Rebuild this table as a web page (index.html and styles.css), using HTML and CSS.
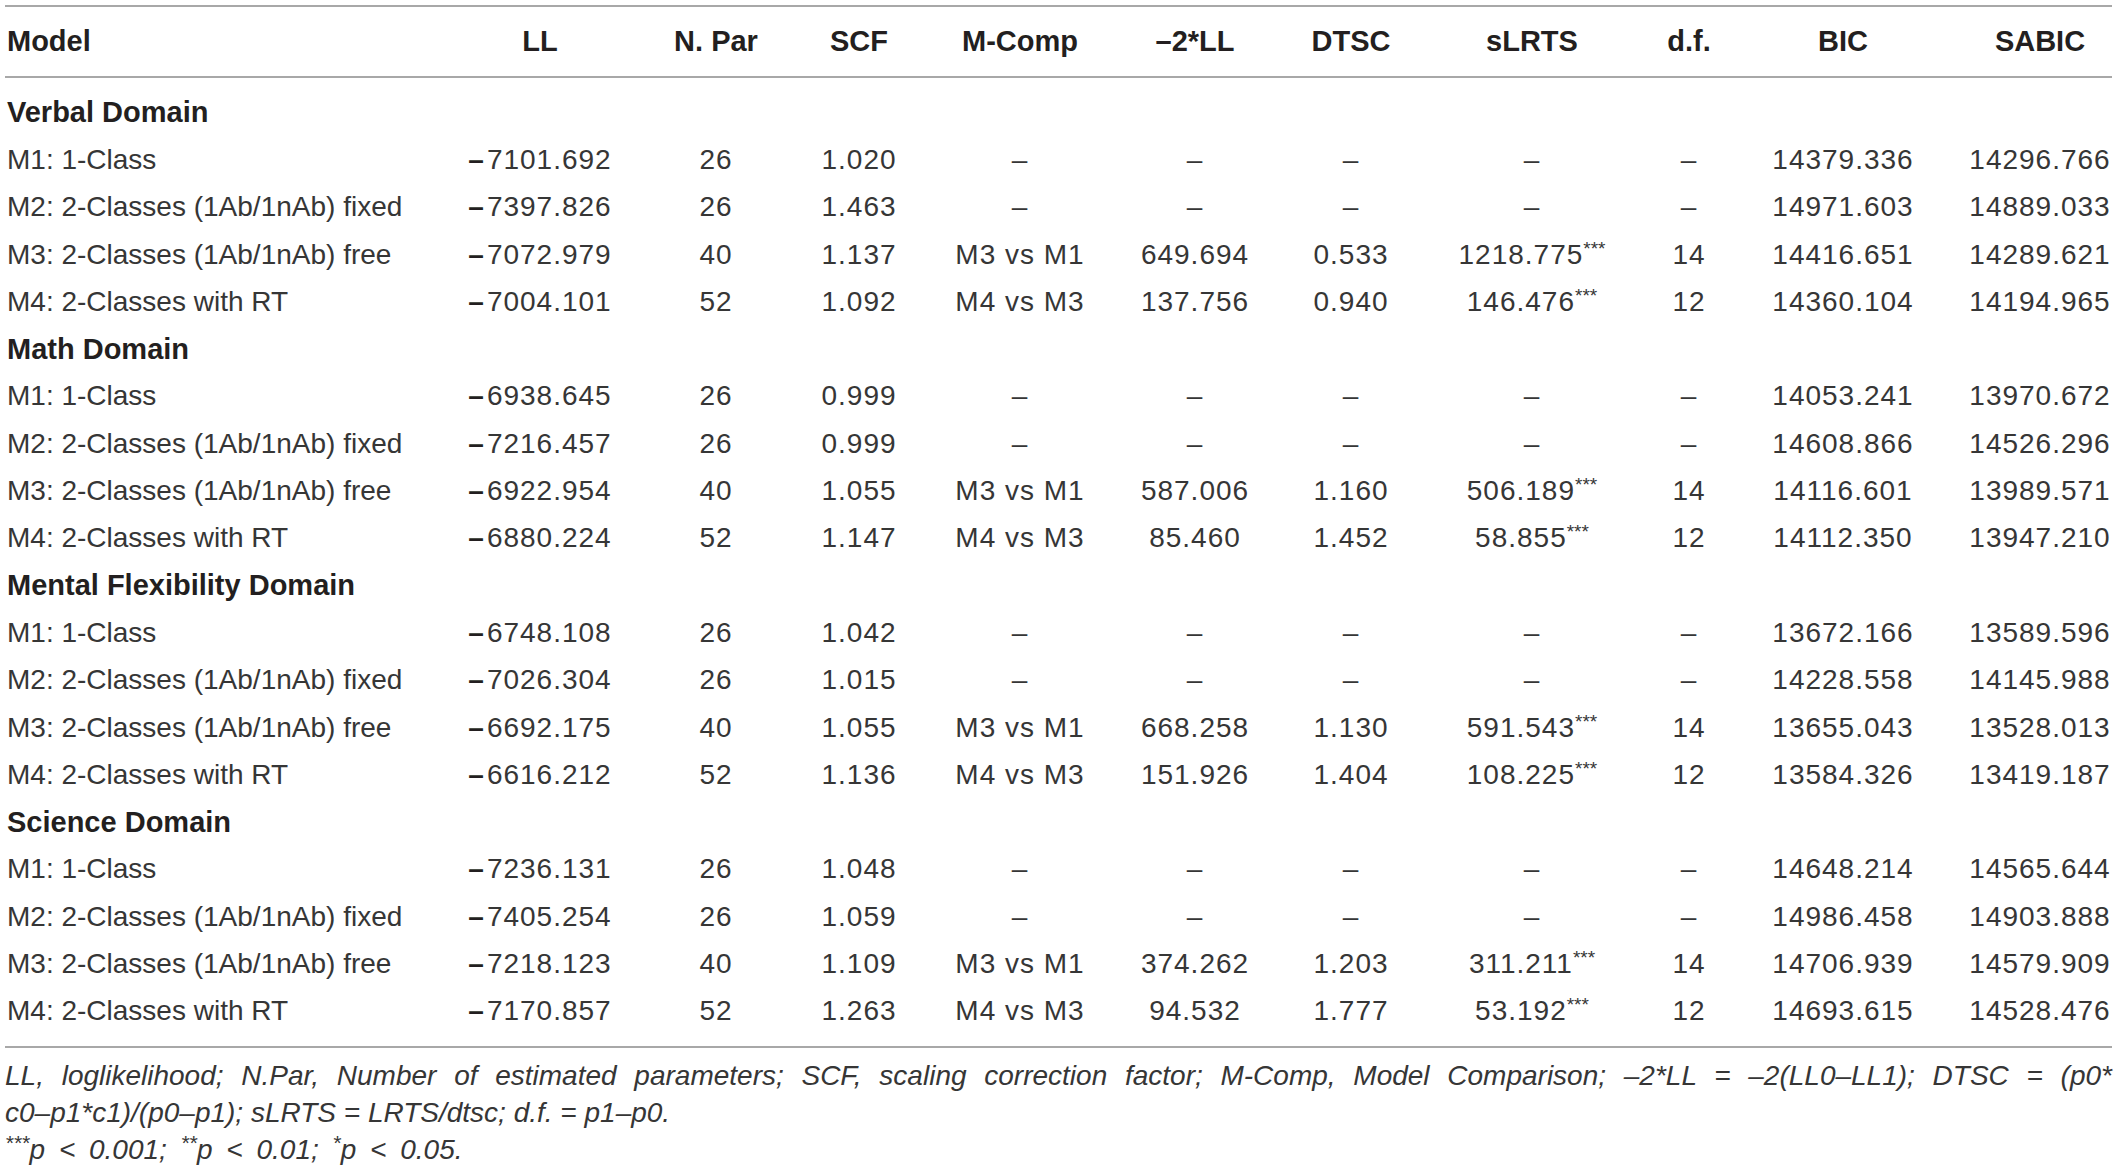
FILE: index.html
```html
<!DOCTYPE html>
<html lang="en">
<head>
<meta charset="utf-8">
<title>Model comparison table</title>
<link rel="stylesheet" href="styles.css">
</head>
<body>
<div class="page">
  <div class="tbl">
    <div class="row head">
      <div class="cell model">Model</div>
      <div class="cell">LL</div>
      <div class="cell">N. Par</div>
      <div class="cell">SCF</div>
      <div class="cell">M-Comp</div>
      <div class="cell">–2*LL</div>
      <div class="cell">DTSC</div>
      <div class="cell">sLRTS</div>
      <div class="cell">d.f.</div>
      <div class="cell">BIC</div>
      <div class="cell">SABIC</div>
    </div>
    <div class="body">
      <div class="row group"><div class="cell model">Verbal Domain</div></div>
      <div class="row"><div class="cell model">M1: 1-Class</div><div class="cell"><span class="neg">–</span>7101.692</div><div class="cell">26</div><div class="cell">1.020</div><div class="cell">–</div><div class="cell">–</div><div class="cell">–</div><div class="cell">–</div><div class="cell">–</div><div class="cell">14379.336</div><div class="cell">14296.766</div></div>
      <div class="row"><div class="cell model">M2: 2-Classes (1Ab/1nAb) fixed</div><div class="cell"><span class="neg">–</span>7397.826</div><div class="cell">26</div><div class="cell">1.463</div><div class="cell">–</div><div class="cell">–</div><div class="cell">–</div><div class="cell">–</div><div class="cell">–</div><div class="cell">14971.603</div><div class="cell">14889.033</div></div>
      <div class="row"><div class="cell model">M3: 2-Classes (1Ab/1nAb) free</div><div class="cell"><span class="neg">–</span>7072.979</div><div class="cell">40</div><div class="cell">1.137</div><div class="cell">M3 vs M1</div><div class="cell">649.694</div><div class="cell">0.533</div><div class="cell">1218.775<sup>***</sup></div><div class="cell">14</div><div class="cell">14416.651</div><div class="cell">14289.621</div></div>
      <div class="row"><div class="cell model">M4: 2-Classes with RT</div><div class="cell"><span class="neg">–</span>7004.101</div><div class="cell">52</div><div class="cell">1.092</div><div class="cell">M4 vs M3</div><div class="cell">137.756</div><div class="cell">0.940</div><div class="cell">146.476<sup>***</sup></div><div class="cell">12</div><div class="cell">14360.104</div><div class="cell">14194.965</div></div>

      <div class="row group"><div class="cell model">Math Domain</div></div>
      <div class="row"><div class="cell model">M1: 1-Class</div><div class="cell"><span class="neg">–</span>6938.645</div><div class="cell">26</div><div class="cell">0.999</div><div class="cell">–</div><div class="cell">–</div><div class="cell">–</div><div class="cell">–</div><div class="cell">–</div><div class="cell">14053.241</div><div class="cell">13970.672</div></div>
      <div class="row"><div class="cell model">M2: 2-Classes (1Ab/1nAb) fixed</div><div class="cell"><span class="neg">–</span>7216.457</div><div class="cell">26</div><div class="cell">0.999</div><div class="cell">–</div><div class="cell">–</div><div class="cell">–</div><div class="cell">–</div><div class="cell">–</div><div class="cell">14608.866</div><div class="cell">14526.296</div></div>
      <div class="row"><div class="cell model">M3: 2-Classes (1Ab/1nAb) free</div><div class="cell"><span class="neg">–</span>6922.954</div><div class="cell">40</div><div class="cell">1.055</div><div class="cell">M3 vs M1</div><div class="cell">587.006</div><div class="cell">1.160</div><div class="cell">506.189<sup>***</sup></div><div class="cell">14</div><div class="cell">14116.601</div><div class="cell">13989.571</div></div>
      <div class="row"><div class="cell model">M4: 2-Classes with RT</div><div class="cell"><span class="neg">–</span>6880.224</div><div class="cell">52</div><div class="cell">1.147</div><div class="cell">M4 vs M3</div><div class="cell">85.460</div><div class="cell">1.452</div><div class="cell">58.855<sup>***</sup></div><div class="cell">12</div><div class="cell">14112.350</div><div class="cell">13947.210</div></div>

      <div class="row group"><div class="cell model">Mental Flexibility Domain</div></div>
      <div class="row"><div class="cell model">M1: 1-Class</div><div class="cell"><span class="neg">–</span>6748.108</div><div class="cell">26</div><div class="cell">1.042</div><div class="cell">–</div><div class="cell">–</div><div class="cell">–</div><div class="cell">–</div><div class="cell">–</div><div class="cell">13672.166</div><div class="cell">13589.596</div></div>
      <div class="row"><div class="cell model">M2: 2-Classes (1Ab/1nAb) fixed</div><div class="cell"><span class="neg">–</span>7026.304</div><div class="cell">26</div><div class="cell">1.015</div><div class="cell">–</div><div class="cell">–</div><div class="cell">–</div><div class="cell">–</div><div class="cell">–</div><div class="cell">14228.558</div><div class="cell">14145.988</div></div>
      <div class="row"><div class="cell model">M3: 2-Classes (1Ab/1nAb) free</div><div class="cell"><span class="neg">–</span>6692.175</div><div class="cell">40</div><div class="cell">1.055</div><div class="cell">M3 vs M1</div><div class="cell">668.258</div><div class="cell">1.130</div><div class="cell">591.543<sup>***</sup></div><div class="cell">14</div><div class="cell">13655.043</div><div class="cell">13528.013</div></div>
      <div class="row"><div class="cell model">M4: 2-Classes with RT</div><div class="cell"><span class="neg">–</span>6616.212</div><div class="cell">52</div><div class="cell">1.136</div><div class="cell">M4 vs M3</div><div class="cell">151.926</div><div class="cell">1.404</div><div class="cell">108.225<sup>***</sup></div><div class="cell">12</div><div class="cell">13584.326</div><div class="cell">13419.187</div></div>

      <div class="row group"><div class="cell model">Science Domain</div></div>
      <div class="row"><div class="cell model">M1: 1-Class</div><div class="cell"><span class="neg">–</span>7236.131</div><div class="cell">26</div><div class="cell">1.048</div><div class="cell">–</div><div class="cell">–</div><div class="cell">–</div><div class="cell">–</div><div class="cell">–</div><div class="cell">14648.214</div><div class="cell">14565.644</div></div>
      <div class="row"><div class="cell model">M2: 2-Classes (1Ab/1nAb) fixed</div><div class="cell"><span class="neg">–</span>7405.254</div><div class="cell">26</div><div class="cell">1.059</div><div class="cell">–</div><div class="cell">–</div><div class="cell">–</div><div class="cell">–</div><div class="cell">–</div><div class="cell">14986.458</div><div class="cell">14903.888</div></div>
      <div class="row"><div class="cell model">M3: 2-Classes (1Ab/1nAb) free</div><div class="cell"><span class="neg">–</span>7218.123</div><div class="cell">40</div><div class="cell">1.109</div><div class="cell">M3 vs M1</div><div class="cell">374.262</div><div class="cell">1.203</div><div class="cell">311.211<sup>***</sup></div><div class="cell">14</div><div class="cell">14706.939</div><div class="cell">14579.909</div></div>
      <div class="row"><div class="cell model">M4: 2-Classes with RT</div><div class="cell"><span class="neg">–</span>7170.857</div><div class="cell">52</div><div class="cell">1.263</div><div class="cell">M4 vs M3</div><div class="cell">94.532</div><div class="cell">1.777</div><div class="cell">53.192<sup>***</sup></div><div class="cell">12</div><div class="cell">14693.615</div><div class="cell">14528.476</div></div>
    </div>
  </div>
  <div class="notes">
    <p class="line-just">LL, loglikelihood; N.Par, Number of estimated parameters; SCF, scaling correction factor; M-Comp, Model Comparison; –2*LL = –2(LL0–LL1); DTSC = (p0*</p>
    <p>c0–p1*c1)/(p0–p1); sLRTS = LRTS/dtsc; d.f. = p1–p0.</p>
    <p class="sig"><sup>***</sup>p &lt; 0.001; <sup>**</sup>p &lt; 0.01; <sup>*</sup>p &lt; 0.05.</p>
  </div>
</div>
</body>
</html>
```

FILE: styles.css
```css
html, body {
  margin: 0;
  padding: 0;
  background: #ffffff;
}

body {
  font-family: "Liberation Sans", Arial, sans-serif;
  color: #231f20;
}

.page {
  padding: 5px 6px 0 5px;
}

.tbl {
  width: 2107px;
}

.row {
  display: grid;
  grid-template-columns: 413px 244px 108px 178px 144px 206px 106px 256px 58px 250px 144px;
  align-items: center;
  height: 47.3px;
  font-size: 28px;
  white-space: nowrap;
}

.cell {
  text-align: center;
}

.cell.model {
  text-align: left;
  padding-left: 2px;
}

.body .cell:not(.model) {
  letter-spacing: 1px;
  color: #363636;
}

.body .cell.model {
  color: #363636;
}

.head {
  height: 69px;
  border-top: 2px solid #a8a8a8;
  border-bottom: 2px solid #a8a8a8;
  font-weight: bold;
  font-size: 29px;
  color: #231f20;
}

.body {
  padding: 11px 0 11px;
  border-bottom: 2px solid #a8a8a8;
}

.body .group .cell.model {
  font-weight: bold;
  font-size: 29px;
  color: #231f20;
}

.neg {
  font-weight: bold;
  margin-right: 2px;
  color: #231f20;
}

.row sup {
  font-size: 19px;
  letter-spacing: 0;
  vertical-align: 9px;
  line-height: 0;
}

.notes {
  font-style: italic;
  font-size: 28px;
  line-height: 37px;
  padding-top: 9px;
  color: #363636;
}

.notes p {
  margin: 0;
}

.notes .line-just {
  text-align: justify;
  text-align-last: justify;
}

.notes sup {
  font-size: 21px;
  vertical-align: 9px;
  line-height: 0;
}

.notes .sig {
  word-spacing: 6px;
}
```
